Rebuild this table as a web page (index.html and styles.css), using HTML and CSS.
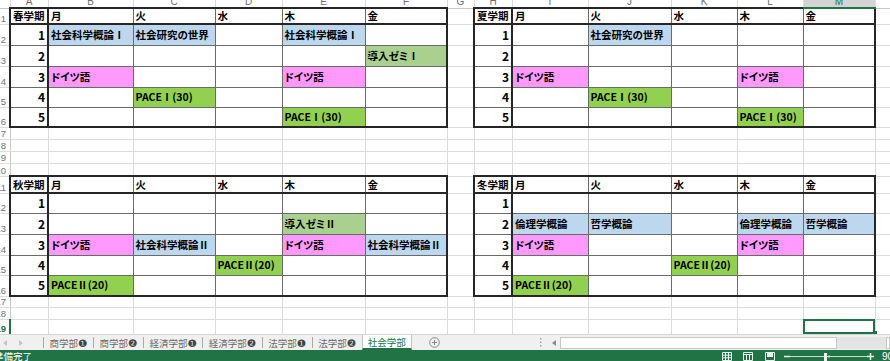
FILE: index.html
```html
<!DOCTYPE html>
<html lang="ja">
<head>
<meta charset="utf-8">
<title>社会学部 時間割</title>
<link rel="stylesheet" href="styles.css">
</head>
<body>
<div class="sheet">
<table class="grid">
<colgroup>
<col class="w-rh"><col class="w-a"><col class="w-b"><col class="w-c"><col class="w-d"><col class="w-e"><col class="w-f"><col class="w-g"><col class="w-h"><col class="w-i"><col class="w-j"><col class="w-k"><col class="w-l"><col class="w-m"><col class="w-n">
</colgroup>
<tr class="r8"><td class="ch corner"></td><td class="ch">A</td><td class="ch">B</td><td class="ch">C</td><td class="ch">D</td><td class="ch">E</td><td class="ch">F</td><td class="ch">G</td><td class="ch">H</td><td class="ch">I</td><td class="ch">J</td><td class="ch">K</td><td class="ch">L</td><td class="ch selc">M</td><td class="ch">N</td></tr>
<tr class="r16"><td class="rh"><div>1</div></td>
<td class="c t l h n hd">春学期</td><td class="c t h">月</td><td class="c t h">火</td><td class="c t h">水</td><td class="c t h">木</td><td class="c t h r">金</td>
<td></td>
<td class="c t l h n hd">夏学期</td><td class="c t h">月</td><td class="c t h">火</td><td class="c t h">水</td><td class="c t h">木</td><td class="c t h r">金</td>
<td></td></tr>
<tr class="r21"><td class="rh"><div>2</div></td>
<td class="c l n num">1</td><td class="c bl">社会科学概論Ⅰ</td><td class="c bl">社会研究の世界</td><td class="c"></td><td class="c bl">社会科学概論Ⅰ</td><td class="c r"></td>
<td></td>
<td class="c l n num">1</td><td class="c"></td><td class="c bl">社会研究の世界</td><td class="c"></td><td class="c"></td><td class="c r"></td>
<td></td></tr>
<tr class="r21"><td class="rh"><div>3</div></td>
<td class="c l n num">2</td><td class="c"></td><td class="c"></td><td class="c"></td><td class="c"></td><td class="c r mg">導入ゼミⅠ</td>
<td></td>
<td class="c l n num">2</td><td class="c"></td><td class="c"></td><td class="c"></td><td class="c"></td><td class="c r"></td>
<td></td></tr>
<tr class="r21"><td class="rh"><div>4</div></td>
<td class="c l n num">3</td><td class="c pk">ドイツ語</td><td class="c"></td><td class="c"></td><td class="c pk">ドイツ語</td><td class="c r"></td>
<td></td>
<td class="c l n num">3</td><td class="c pk">ドイツ語</td><td class="c"></td><td class="c"></td><td class="c pk">ドイツ語</td><td class="c r"></td>
<td></td></tr>
<tr class="r20"><td class="rh"><div>5</div></td>
<td class="c l n num">4</td><td class="c"></td><td class="c gr">PACEⅠ(30)</td><td class="c"></td><td class="c"></td><td class="c r"></td>
<td></td>
<td class="c l n num">4</td><td class="c"></td><td class="c gr">PACEⅠ(30)</td><td class="c"></td><td class="c"></td><td class="c r"></td>
<td></td></tr>
<tr class="r20"><td class="rh"><div>6</div></td>
<td class="c l n b num">5</td><td class="c b"></td><td class="c b"></td><td class="c b"></td><td class="c b gr">PACEⅠ(30)</td><td class="c b r"></td>
<td></td>
<td class="c l n b num">5</td><td class="c b"></td><td class="c b"></td><td class="c b"></td><td class="c b gr">PACEⅠ(30)</td><td class="c b r"></td>
<td></td></tr>
<tr class="r12"><td class="rh"><div>7</div></td><td></td><td></td><td></td><td></td><td></td><td></td><td></td><td></td><td></td><td></td><td></td><td></td><td></td><td></td></tr>
<tr class="r12"><td class="rh"><div>8</div></td><td></td><td></td><td></td><td></td><td></td><td></td><td></td><td></td><td></td><td></td><td></td><td></td><td></td><td></td></tr>
<tr class="r12"><td class="rh"><div>9</div></td><td></td><td></td><td></td><td></td><td></td><td></td><td></td><td></td><td></td><td></td><td></td><td></td><td></td><td></td></tr>
<tr class="r13"><td class="rh"><div>10</div></td><td></td><td></td><td></td><td></td><td></td><td></td><td></td><td></td><td></td><td></td><td></td><td></td><td></td><td></td></tr>
<tr class="r17"><td class="rh"><div>11</div></td>
<td class="c t l h n hd">秋学期</td><td class="c t h">月</td><td class="c t h">火</td><td class="c t h">水</td><td class="c t h">木</td><td class="c t h r">金</td>
<td></td>
<td class="c t l h n hd">冬学期</td><td class="c t h">月</td><td class="c t h">火</td><td class="c t h">水</td><td class="c t h">木</td><td class="c t h r">金</td>
<td></td></tr>
<tr class="r20"><td class="rh"><div>12</div></td>
<td class="c l n num">1</td><td class="c"></td><td class="c"></td><td class="c"></td><td class="c"></td><td class="c r"></td>
<td></td>
<td class="c l n num">1</td><td class="c"></td><td class="c"></td><td class="c"></td><td class="c"></td><td class="c r"></td>
<td></td></tr>
<tr class="r21"><td class="rh"><div>13</div></td>
<td class="c l n num">2</td><td class="c"></td><td class="c"></td><td class="c"></td><td class="c mg">導入ゼミⅡ</td><td class="c r"></td>
<td></td>
<td class="c l n num">2</td><td class="c bl">倫理学概論</td><td class="c bl">哲学概論</td><td class="c"></td><td class="c bl">倫理学概論</td><td class="c r bl">哲学概論</td>
<td></td></tr>
<tr class="r21"><td class="rh"><div>14</div></td>
<td class="c l n num">3</td><td class="c pk">ドイツ語</td><td class="c bl">社会科学概論Ⅱ</td><td class="c"></td><td class="c pk">ドイツ語</td><td class="c r bl">社会科学概論Ⅱ</td>
<td></td>
<td class="c l n num">3</td><td class="c pk">ドイツ語</td><td class="c"></td><td class="c"></td><td class="c pk">ドイツ語</td><td class="c r"></td>
<td></td></tr>
<tr class="r20"><td class="rh"><div>15</div></td>
<td class="c l n num">4</td><td class="c"></td><td class="c"></td><td class="c gr">PACEⅡ(20)</td><td class="c"></td><td class="c r"></td>
<td></td>
<td class="c l n num">4</td><td class="c"></td><td class="c"></td><td class="c gr">PACEⅡ(20)</td><td class="c"></td><td class="c r"></td>
<td></td></tr>
<tr class="r21"><td class="rh"><div>16</div></td>
<td class="c l n b num">5</td><td class="c b gr">PACEⅡ(20)</td><td class="c b"></td><td class="c b"></td><td class="c b"></td><td class="c b r"></td>
<td></td>
<td class="c l n b num">5</td><td class="c b gr">PACEⅡ(20)</td><td class="c b"></td><td class="c b"></td><td class="c b"></td><td class="c b r"></td>
<td></td></tr>
<tr class="r11"><td class="rh"><div>17</div></td><td></td><td></td><td></td><td></td><td></td><td></td><td></td><td></td><td></td><td></td><td></td><td></td><td></td><td></td></tr>
<tr class="r12"><td class="rh"><div>18</div></td><td></td><td></td><td></td><td></td><td></td><td></td><td></td><td></td><td></td><td></td><td></td><td></td><td></td><td></td></tr>
<tr class="r15"><td class="rh selr"><div>19</div></td><td></td><td></td><td></td><td></td><td></td><td></td><td></td><td></td><td></td><td></td><td></td><td></td><td class="sel"></td><td></td></tr>
</table>
</div>

<div class="tabbar">
  <div class="nav">
    <svg width="4" height="6" viewBox="0 0 4 6"><path d="M4 0V6L0 3z" fill="#c4c4c4"/></svg>
    <svg width="4" height="6" viewBox="0 0 4 6"><path d="M0 0V6L4 3z" fill="#c4c4c4"/></svg>
  </div>
  <div class="tabs">
    <div class="tab">商学部<span class="cd">❶</span></div>
    <div class="tab">商学部<span class="cd">❷</span></div>
    <div class="tab">経済学部<span class="cd">❶</span></div>
    <div class="tab">経済学部<span class="cd">❷</span></div>
    <div class="tab">法学部<span class="cd">❶</span></div>
    <div class="tab">法学部<span class="cd">❷</span></div>
    <div class="tab active">社会学部</div>
  </div>
  <div class="add">
    <svg width="11" height="11" viewBox="0 0 11 11"><circle cx="5.5" cy="5.5" r="4.8" fill="none" stroke="#8a8a8a"/><path d="M5.5 3v5M3 5.5h5" stroke="#8a8a8a"/></svg>
  </div>
  <div class="hscroll">
    <svg class="dots" width="2" height="9" viewBox="0 0 2 9"><path d="M0 0h1.5v1.5H0zM0 3.5h1.5V5H0zM0 7h1.5v1.5H0z" fill="#a0a0a0"/></svg>
    <div class="sarrow"><svg width="4" height="6" viewBox="0 0 4 6"><path d="M4 0V6L0 3z" fill="#8a8a8a"/></svg></div>
    <div class="thumb"></div>
    <div class="track"></div>
    <div class="rbox"></div>
  </div>
</div>

<div class="status">
  <span class="ready">準備完了</span>
  <div class="views">
    <svg class="vi" width="10" height="9" viewBox="0 0 10 9"><path d="M.5.5h9v8h-9zM.5 3.2h9M.5 5.8h9M3.5.5v8M6.5.5v8" fill="none" stroke="#e9f2ec"/></svg>
    <svg class="vi2" width="10" height="9" viewBox="0 0 10 9"><path d="M.5.5h9v8h-9zM3.5 2.5v6M6.5 2.5v6M.5 2.5h9" fill="none" stroke="#e9f2ec"/></svg>
    <svg class="vi3" width="10" height="9" viewBox="0 0 10 9"><path d="M.5.5h9v8h-9z" fill="none" stroke="#e9f2ec"/><path d="M2 1h6v4H2z" fill="#e9f2ec"/></svg>
    <svg class="minus" width="6" height="9" viewBox="0 0 6 9"><path d="M0 4.5h6" stroke="#e9f2ec" stroke-width="1.5"/></svg>
    <svg class="slider" width="77" height="9" viewBox="0 0 77 9"><path d="M0 4.5h77" stroke="#c9ddd0"/><path d="M34 1h3v8h-3z" fill="#e9f2ec"/><path d="M39 3v3" stroke="#c9ddd0"/></svg>
    <svg class="plus" width="7" height="9" viewBox="0 0 7 9"><path d="M0 4.5h7M3.5 1v7" stroke="#e9f2ec" stroke-width="1.5"/></svg>
    <span class="zoomv">90%</span>
  </div>
</div>
</body>
</html>
```

FILE: styles.css
```css
* { box-sizing: border-box; }
html, body { margin: 0; padding: 0; }
body {
  width: 890px;
  height: 361px;
  overflow: hidden;
  background: #ffffff;
  font-family: "Noto Sans CJK JP", "Noto Sans", sans-serif;
}

/* ---------- sheet ---------- */
.sheet { height: 334px; overflow: hidden; }
.grid { border-collapse: collapse; table-layout: fixed; width: 955px; }
.grid td {
  border: 1px solid #dcdcdc;
  padding: 0 2px;
  white-space: nowrap;
  overflow: hidden;
  font-size: 10.5px;
  font-weight: 700;
  line-height: 12px;
  color: #000;
  vertical-align: middle;
  font-feature-settings: "palt";
}
.w-rh { width: 10px; } .w-a { width: 38px; } .w-b { width: 85px; } .w-c { width: 82px; }
.w-d { width: 67px; } .w-e { width: 83px; } .w-f { width: 82px; } .w-g { width: 27px; }
.w-h { width: 38px; } .w-i { width: 76px; } .w-j { width: 83px; } .w-k { width: 66px; }
.w-l { width: 66px; } .w-m { width: 72px; } .w-n { width: 80px; }

.r8 { height: 8px; } .r11 { height: 11px; } .r12 { height: 12px; } .r13 { height: 13px; }
.r15 { height: 15px; } .r16 { height: 16px; } .r17 { height: 17px; } .r20 { height: 20px; }
.r21 { height: 21px; }

/* column headers */
.grid td.ch {
  border-top: none;
  border-bottom-color: #c8c8c8;
  padding: 0;
  font-family: "Liberation Sans", sans-serif;
  font-size: 10px;
  font-weight: 400;
  color: #6e6e6e;
  text-align: center;
  vertical-align: top;
  line-height: 4px;
  overflow: visible;
}
.grid td.corner { border-left: none; }
.grid td.selc {
  background: #d4d4d4;
  color: #217346;
  border-bottom: 2px solid #217346;
}

/* row headers */
.grid td.rh {
  border-left: none;
  border-right-color: #c8c8c8;
  padding: 0;
  font-family: "Liberation Sans", sans-serif;
  font-size: 9.5px;
  font-weight: 400;
  color: #727272;
  vertical-align: bottom;
  line-height: 9px;
}
.rh div {
  width: 6px;
  overflow: hidden;
  direction: rtl;
  padding-bottom: 1px;
}
.grid td.selr {
  color: #217346;
  font-weight: 700;
  border-right: 2px solid #217346;
}

/* timetable cells */
.grid td.c { border: 1px solid #6a6a6a; }
.grid td.t { border-top: 2px solid #262626; }
.grid td.b { border-bottom: 2px solid #262626; }
.grid td.l { border-left: 2px solid #262626; }
.grid td.r { border-right: 2px solid #262626; }
.grid td.h { border-bottom: 2px solid #262626; }
.grid td.n { border-right: 2px solid #262626; }
.grid td.num {
  text-align: right;
  font-size: 12px;
  padding-right: 2px;
}
.grid td.hd { padding-left: 2px; }

.bl { background: #bdd7ee; }
.pk { background: #ff99ff; }
.gr { background: #92d050; }
.mg { background: #a9d08e; }

.grid td.sel {
  outline: 2px solid #217346;
  outline-offset: -2px;
  position: relative;
  overflow: visible;
}
.grid td.sel::after {
  content: "";
  position: absolute;
  right: -2px;
  bottom: -1px;
  width: 4px;
  height: 4px;
  background: #217346;
}

/* ---------- sheet tabs ---------- */
.tabbar {
  height: 16px;
  display: flex;
  align-items: stretch;
  background: #f0f0f0;
  border-top: 1px solid #d6d6d6;
  font-size: 9.5px;
  color: #6a6a6a;
  white-space: nowrap;
}
.nav {
  width: 43px;
  flex-shrink: 0;
  display: flex;
  align-items: center;
  gap: 12px;
  padding-left: 3px;
}
.tabs { display: flex; }
.tab {
  display: flex;
  align-items: center;
  padding: 0 5.5px;
  margin: 2px 0;
  border-left: 1px solid #a9a9a9;
  line-height: 12px;
}
.cd {
  font-family: "DejaVu Sans", sans-serif;
  font-size: 10.5px;
  color: #444;
}
.tab.active {
  margin: 0;
  padding: 0 5px;
  background: #ffffff;
  color: #217346;
  border-left: 1px solid #c4c4c4;
  border-right: 1px solid #c4c4c4;
  border-bottom: 2px solid #217346;
}
.add {
  margin-left: 17px;
  display: flex;
  align-items: center;
}
.hscroll {
  margin-left: auto;
  width: 353px;
  display: flex;
  align-items: center;
}
.dots { margin-left: 3px; margin-right: 6px; }
.sarrow {
  width: 12px;
  height: 12px;
  display: flex;
  align-items: center;
  justify-content: center;
}
.thumb {
  width: 277px;
  height: 12px;
  background: #fdfdfd;
  border: 1px solid #c9c9c9;
}
.track {
  width: 49px;
  height: 12px;
  background: #e4e4e4;
}
.rbox {
  flex: 1;
  height: 12px;
  background: #fdfdfd;
  border: 1px solid #c9c9c9;
}

/* ---------- status bar ---------- */
.status {
  height: 11px;
  background: #217346;
  display: flex;
  align-items: flex-start;
  overflow: hidden;
  color: #ffffff;
}
.ready {
  margin-left: -6px;
  font-size: 9.5px;
  line-height: 13px;
}
.views {
  margin-left: auto;
  margin-right: -12px;
  width: 180px;
  flex-shrink: 0;
  display: flex;
  align-items: flex-start;
  padding-top: 2px;
}
.vi2 { margin-left: 11px; }
.vi3 { margin-left: 12px; }
.minus { margin-left: 9px; }
.zoomv {
  margin-left: 8px;
  font-family: "Liberation Sans", sans-serif;
  font-size: 10px;
  line-height: 12px;
  margin-top: -1px;
}
```
